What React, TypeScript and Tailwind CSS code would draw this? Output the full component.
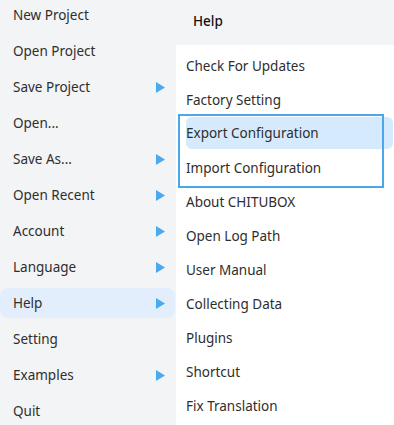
import React from 'react';

const leftItems: { label: string; arrow?: boolean; active?: boolean }[] = [
    { label: 'New Project' },
    { label: 'Open Project' },
    { label: 'Save Project', arrow: true },
    { label: 'Open...' },
    { label: 'Save As...', arrow: true },
    { label: 'Open Recent', arrow: true },
    { label: 'Account', arrow: true },
    { label: 'Language', arrow: true },
    { label: 'Help', arrow: true, active: true },
    { label: 'Setting' },
    { label: 'Examples', arrow: true },
    { label: 'Quit' },
];

const helpItems = [
    'Check For Updates',
    'Factory Setting',
    'Export Configuration',
    'Import Configuration',
    'About CHITUBOX',
    'Open Log Path',
    'User Manual',
    'Collecting Data',
    'Plugins',
    'Shortcut',
    'Fix Translation',
];

function Arrow() {
    return (
        <svg width="9" height="11" viewBox="0 0 9 11" className="shrink-0">
            <path d="M0 0 L9 5.5 L0 11 Z" fill="#4ba9ef" />
        </svg>
    );
}

export default function App() {
    return (
        <div
            className="w-[394px] h-[425px] overflow-hidden flex bg-[#f3f4f6] text-[13.5px] text-[#2e2e2e]"
            style={{ fontFamily: '"Noto Sans", "Open Sans", sans-serif' }}
        >
            <div className="w-[176px] shrink-0 flex flex-col mt-[-3px]">
                {leftItems.map((item) => (
                    <div key={item.label} className="h-[36px] shrink-0 py-[3px] flex">
                        <div
                            className={`flex-1 flex items-center justify-between pl-[13px] pr-[10px] mr-[1px] rounded-[8px] ${
                                item.active ? 'bg-[#e2eefc]' : ''
                            }`}
                        >
                            <span>{item.label}</span>
                            {item.arrow && <Arrow />}
                        </div>
                    </div>
                ))}
            </div>
            <div className="flex-1 flex flex-col">
                <div className="h-[45px] shrink-0 flex items-center pl-[17px] pb-[3px] text-[#111111] font-medium">Help</div>
                <div className="flex-1 bg-white relative pt-[4px]">
                    {helpItems.map((label, i) => (
                        <div key={label} className="h-[34px] shrink-0 flex">
                            <div
                                className={`flex-1 flex items-center ml-[10px] mr-[1px] rounded-[6px] ${
                                    i === 2 ? 'bg-[#d5eafc] h-[32px]' : ''
                                }`}
                            >
                                {label}
                            </div>
                        </div>
                    ))}
                    <div className="absolute left-[2px] top-[69px] w-[206px] h-[74px] border-2 border-[#4aa7ea] pointer-events-none" />
                </div>
            </div>
        </div>
    );
}
